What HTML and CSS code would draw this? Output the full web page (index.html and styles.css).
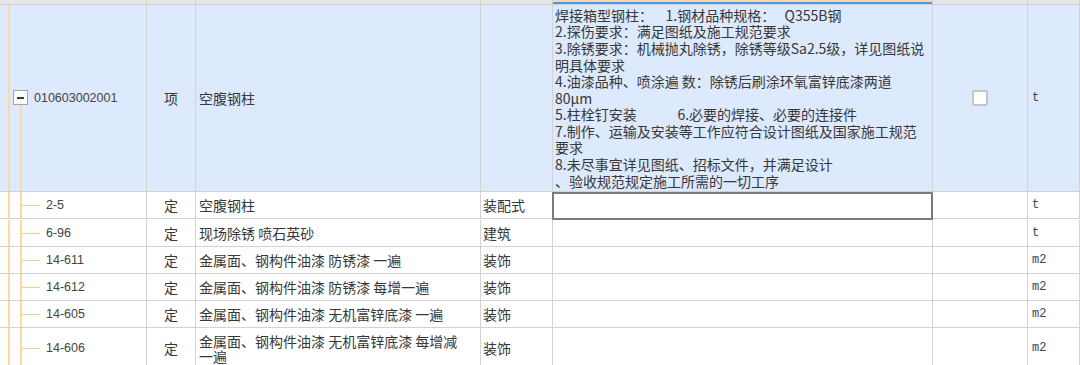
FILE: index.html
```html
<!DOCTYPE html>
<html lang="zh-CN">
<head>
<meta charset="utf-8">
<title>清单</title>
<link rel="stylesheet" href="styles.css">
</head>
<body>
<div class="grid">
  <div class="row head">
    <div class="cell"></div>
    <div class="cell"></div>
    <div class="cell"></div>
    <div class="cell"></div>
    <div class="cell active-col"></div>
    <div class="cell"></div>
    <div class="cell"></div>
  </div>

  <div class="row main">
    <div class="cell code tree-root"><span class="toggle"><span class="minus"></span></span><span class="code-text">010603002001</span></div>
    <div class="cell center">项</div>
    <div class="cell name">空腹钢柱</div>
    <div class="cell"></div>
    <div class="cell desc">
      <div class="line">焊接箱型钢柱：    1.钢材品种规格：   Q355B钢</div>
      <div class="line">2.探伤要求：满足图纸及施工规范要求</div>
      <div class="line">3.除锈要求：机械抛丸除锈，除锈等级Sa2.5级，详见图纸说</div>
      <div class="line">明具体要求</div>
      <div class="line">4.油漆品种、喷涂遍 数：除锈后刷涂环氧富锌底漆两道</div>
      <div class="line">80μm</div>
      <div class="line">5.柱栓钉安装             6.必要的焊接、必要的连接件</div>
      <div class="line">7.制作、运输及安装等工作应符合设计图纸及国家施工规范</div>
      <div class="line">要求</div>
      <div class="line">8.未尽事宜详见图纸、招标文件，并满足设计</div>
      <div class="line">、验收规范规定施工所需的一切工序</div>
    </div>
    <div class="cell center"><span class="check"></span></div>
    <div class="cell unit">t</div>
  </div>

  <div class="row child">
    <div class="cell code tree-child">2-5</div>
    <div class="cell center">定</div>
    <div class="cell name">空腹钢柱</div>
    <div class="cell kind">装配式</div>
    <div class="cell selected"></div>
    <div class="cell"></div>
    <div class="cell unit">t</div>
  </div>

  <div class="row child">
    <div class="cell code tree-child">6-96</div>
    <div class="cell center">定</div>
    <div class="cell name">现场除锈 喷石英砂</div>
    <div class="cell kind">建筑</div>
    <div class="cell"></div>
    <div class="cell"></div>
    <div class="cell unit">t</div>
  </div>

  <div class="row child">
    <div class="cell code tree-child">14-611</div>
    <div class="cell center">定</div>
    <div class="cell name">金属面、钢构件油漆 防锈漆 一遍</div>
    <div class="cell kind">装饰</div>
    <div class="cell"></div>
    <div class="cell"></div>
    <div class="cell unit">m2</div>
  </div>

  <div class="row child">
    <div class="cell code tree-child">14-612</div>
    <div class="cell center">定</div>
    <div class="cell name">金属面、钢构件油漆 防锈漆 每增一遍</div>
    <div class="cell kind">装饰</div>
    <div class="cell"></div>
    <div class="cell"></div>
    <div class="cell unit">m2</div>
  </div>

  <div class="row child">
    <div class="cell code tree-child">14-605</div>
    <div class="cell center">定</div>
    <div class="cell name">金属面、钢构件油漆 无机富锌底漆 一遍</div>
    <div class="cell kind">装饰</div>
    <div class="cell"></div>
    <div class="cell"></div>
    <div class="cell unit">m2</div>
  </div>

  <div class="row child tall">
    <div class="cell code tree-child">14-606</div>
    <div class="cell center">定</div>
    <div class="cell name two">金属面、钢构件油漆 无机富锌底漆 每增减<br>一遍</div>
    <div class="cell kind">装饰</div>
    <div class="cell"></div>
    <div class="cell"></div>
    <div class="cell unit">m2</div>
  </div>
</div>
</body>
</html>
```

FILE: styles.css
```css
html, body {
  margin: 0;
  padding: 0;
  background: #ffffff;
}

body {
  width: 1080px;
  height: 365px;
  overflow: hidden;
  font-family: "Noto Sans CJK SC", "Noto Sans", sans-serif;
  font-size: 14px;
  color: #383838;
}

.grid {
  display: flex;
  flex-direction: column;
}

.row {
  display: grid;
  grid-template-columns: 147px 49px 285px 72px 380px 95px 1fr;
}

.cell {
  border-right: 1px solid #d3d3d3;
  border-bottom: 1px solid #d3d3d3;
  display: flex;
  align-items: center;
  min-width: 0;
  white-space: nowrap;
  line-height: 16px;
}

.head .cell {
  height: 4px;
  background: #e6e6e6;
  border-bottom-color: #cdcdcd;
}

.head .active-col {
  background: linear-gradient(#f9d9a8 0, #f9d9a8 2px, #4f95ee 2px, #4f95ee 4px);
}

.main .cell {
  height: 186px;
  background: #dde9fc;
}

.child .cell {
  height: 26px;
}

.tall .cell {
  height: 40px;
}

.center {
  justify-content: center;
}

.name {
  padding-left: 3px;
}

.name.two {
  white-space: normal;
  line-height: 15px;
  padding-top: 1px;
}

.kind {
  padding-left: 2px;
}

.unit {
  padding-left: 4px;
  font-family: "Liberation Mono", "DejaVu Sans Mono", monospace;
  font-size: 12px;
  color: #444;
}

.code {
  font-family: "Liberation Sans", Arial, sans-serif;
  font-size: 12.5px;
  color: #444;
}

/* tree connectors */
.main .tree-root {
  padding-left: 13px;
  background:
    linear-gradient(#fbd8a6, #fbd8a6) 8px 0 / 2px 100% no-repeat,
    linear-gradient(#fbd8a6, #fbd8a6) 9px 50% / 5px 1px no-repeat,
    linear-gradient(#fbd8a6, #fbd8a6) 20px 100% / 2px calc(50% - 7px) no-repeat,
    #dde9fc;
}

.tree-child {
  padding-left: 46px;
  background:
    linear-gradient(#fbd8a6, #fbd8a6) 8px 0 / 2px 100% no-repeat,
    linear-gradient(#fbd8a6, #fbd8a6) 20px 0 / 2px 100% no-repeat,
    linear-gradient(#f9cb8e, #f9cb8e) 22px 50% / 18px 1px no-repeat;
}

.toggle {
  width: 13px;
  height: 13px;
  border: 1px solid #a3a3a3;
  background: #fbfbfb;
  display: flex;
  align-items: center;
  justify-content: center;
  margin-top: -1px;
}

.minus {
  width: 7px;
  height: 2px;
  background: #3a3a3a;
}

.code-text {
  margin-left: 6px;
}

.desc {
  flex-direction: column;
  align-items: flex-start;
  justify-content: center;
  padding-left: 2px;
  white-space: pre;
}

.line {
  height: 16.6px;
  line-height: 16.6px;
}

.check {
  width: 12px;
  height: 12px;
  border: 2px solid #c6c6c6;
  border-radius: 3px;
  background: #ffffff;
}

.child .selected {
  border: 2px solid #7b7b7b;
  margin-left: -1px;
  height: 24px;
}
```
